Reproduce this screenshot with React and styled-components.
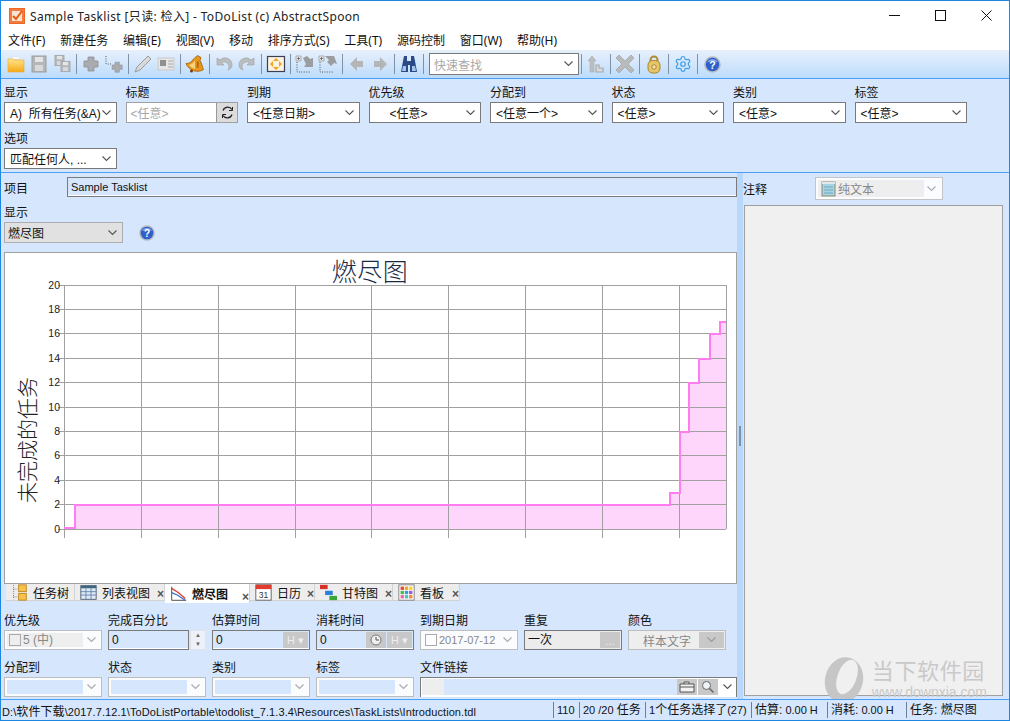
import styled, { createGlobalStyle } from "styled-components";
import { Settings } from "lucide-react";

const FONT = `"Liberation Sans", "Noto Sans CJK SC", sans-serif`;
const UI_FONT = `"Noto Sans", "Noto Sans CJK SC", sans-serif`;
const CJK = `"Noto Sans CJK SC", "Noto Sans", sans-serif`;
const PANEL = "#d6e7fd";
const LINE = "#4b9ff5";

const GlobalStyle = createGlobalStyle`
  html, body { margin: 0; padding: 0; background: #fff; }
  * { box-sizing: border-box; }
`;

////---- small drawings

const Chevron = ({ color = "#555" }) => (
  <svg width="9" height="6" viewBox="0 0 9 6">
    <polyline points="0.5,0.5 4.5,4.5 8.5,0.5" fill="none" stroke={color} strokeWidth="1.1" />
  </svg>
);

const HelpIcon = ({ size = 16 }) => (
  <svg width={size} height={size} viewBox="0 0 16 16">
    <circle cx="8" cy="8" r="7.8" fill="#b4b7c0" />
    <circle cx="8" cy="8" r="6.3" fill="#2f5fc8" />
    <path d="M3 6 A5.5 5 0 0 1 13 6 A9 6 0 0 0 3 6" fill="#8fb0ee" />
    <text x="8" y="12" textAnchor="middle" fontSize="10" fontWeight="700" fontFamily="Liberation Sans" fill="#fff">?</text>
  </svg>
);

const Ico = ({ children, w = 20, h = 20 }) => (
  <svg width={w} height={h} viewBox="0 0 20 20">
    {children}
  </svg>
);

const Cross = ({ x = 0, y = 0, s = 1 }) => (
  <path
    transform={`translate(${x} ${y}) scale(${s})`}
    d="M7 3h6v4h4v6h-4v4H7v-4H3V7h4z"
    fill="#a9abae"
    stroke="#8f9194"
    strokeWidth="0.8"
  />
);

const Floppy = ({ x = 0, y = 0, s = 1 }) => (
  <g transform={`translate(${x} ${y}) scale(${s})`}>
    <rect x="3" y="2" width="14" height="16" fill="#b5b6b8" stroke="#9c9d9f" />
    <rect x="6" y="3" width="8" height="5" fill="#e4e5e7" />
    <rect x="6" y="11" width="8" height="6" fill="#d8d9db" />
  </g>
);

const DotBox = ({ flip }) => (
  <g>
    <path d="M2 8v10h14" fill="none" stroke="#555" strokeWidth="1" strokeDasharray="1 1.4" />
    <path d="M1 2h5v5H1z" fill="#e8e8e8" stroke="#888" strokeWidth="0.6" />
    <path d="M3.5 3v3M2 4.5h3" stroke="#555" strokeWidth="0.7" />
    <path
      d={flip ? "M7 2h9l3 8-3-1-3 3-4-4 2-2z" : "M8 4l4-2 3 3 3-1v9h-9l2-3z"}
      fill="#9b9da0"
    />
  </g>
);

const TOOL_ICONS = {
  folder: (
    <Ico>
      <defs>
        <linearGradient id="fold" x1="0" y1="0" x2="0" y2="1">
          <stop offset="0" stopColor="#ffe58a" />
          <stop offset="1" stopColor="#f7a916" />
        </linearGradient>
      </defs>
      <path d="M4 5l3-2h5l3 2z" fill="#fff" stroke="#ddd" strokeWidth="0.5" />
      <path d="M2 5h5l1 1h10v12H2z" fill="url(#fold)" stroke="#e9a92b" strokeWidth="0.6" />
    </Ico>
  ),
  save: <Ico><Floppy /></Ico>,
  saveAll: (
    <Ico>
      <Floppy x="1" y="0" s="0.65" />
      <Floppy x="7" y="6" s="0.65" />
    </Ico>
  ),
  plus: <Ico><Cross /></Ico>,
  subPlus: (
    <Ico>
      <path d="M2 2v8h5" fill="none" stroke="#555" strokeDasharray="1 1.4" />
      <Cross x="6" y="6" s="0.72" />
    </Ico>
  ),
  pencil: (
    <Ico>
      <path d="M15 2l3 3L7 16l-5 2 2-5z" fill="#d9d9d9" stroke="#9a9a9a" />
    </Ico>
  ),
  card: (
    <Ico>
      <rect x="2" y="4" width="16" height="12" fill="#e6e6e6" stroke="#c9c9c9" />
      <rect x="4" y="6" width="6" height="6" fill="#909090" />
      <path d="M12 7h5M12 10h5M12 13h5" stroke="#aaa" />
    </Ico>
  ),
  bell: (
    <Ico>
      <path d="M12.5 1.500l3.500 2-1 3c2 3 2 6 3.500 9-2.500 2-8 2.500-11.500.5-2.500-1.500-5-3.500-6-6.500 3.500 0 5.500-1.500 7.500-4.500z" fill="#e8961c" stroke="#9a5a0a" strokeWidth="0.8" />
      <path d="M10 6.500c-1 2-3.500 4-6 4.500 1.500 2 3.500 3 6 4z" fill="#fbd277" />
      <path d="M12 7l2 1-.5 6-2-.5z" fill="#b8660c" />
      <circle cx="6.500" cy="17" r="1.500" fill="#7a3d05" />
    </Ico>
  ),
  undo: (
    <Ico>
      <path d="M3 4v7h7L7.500 8.500A5 5 0 0 1 15 13c0 1-.3 2-1 3 3-1 4-3 4-5A7 7 0 0 0 6 6z" fill="#bcbdbf" stroke="#9d9ea0" strokeWidth="0.6" />
    </Ico>
  ),
  redo: (
    <Ico>
      <path d="M17 4v7h-7l2.500-2.500A5 5 0 0 0 5 13c0 1 .3 2 1 3-3-1-4-3-4-5a7 7 0 0 1 12-5z" fill="#bcbdbf" stroke="#9d9ea0" strokeWidth="0.6" />
    </Ico>
  ),
  box: (
    <Ico>
      <rect x="1.500" y="2.500" width="17" height="15" fill="#fbf3e2" stroke="#3c3f55" strokeWidth="1.2" />
      <path d="M10 4l3 3H7zM10 16l-3-3h6zM4 10l3-3v6zM16 10l-3 3V7z" fill="#f2a31c" />
    </Ico>
  ),
  moveDown: <Ico><DotBox /></Ico>,
  moveUp: <Ico><DotBox flip /></Ico>,
  left: (
    <Ico>
      <path d="M3 10l7-7v4h6v6h-6v4z" fill="#b4b5b7" />
    </Ico>
  ),
  right: (
    <Ico>
      <path d="M17 10l-7-7v4H4v6h6v4z" fill="#b4b5b7" />
    </Ico>
  ),
  binoculars: (
    <Ico>
      <path d="M5 2h3v5h4V2h3l1 5 2 11h-7V11H9v7H2L4 7z" fill="#2c4a86" />
      <path d="M4 12h3v5H3zM13 12h3l1 5h-4z" fill="#a8c3ea" />
    </Ico>
  ),
  upLevel: (
    <Ico>
      <path d="M6 2l4 5H8v11H4V7H2z" fill="#bcbdbf" stroke="#a5a6a8" strokeWidth="0.5" />
      <path d="M10 11h3v3h4v4h-7z" fill="#d8d9db" stroke="#a8a9ab" strokeWidth="1.2" />
    </Ico>
  ),
  del: (
    <Ico>
      <path d="M4 1l6 6 6-6 3 3-6 6 6 6-3 3-6-6-6 6-3-3 6-6-6-6z" fill="#b9babc" stroke="#97989a" strokeWidth="0.6" />
    </Ico>
  ),
  lock: (
    <Ico>
      <path d="M6.500 8V6a3.500 3.500 0 0 1 7 0v2" fill="none" stroke="#b08a35" strokeWidth="2" />
      <rect x="4" y="6.500" width="12" height="12.500" rx="4.500" fill="#e6c468" stroke="#a98428" />
      <circle cx="10" cy="13" r="2.200" fill="#f4e3a8" stroke="#8d6d1c" strokeWidth="0.7" />
    </Ico>
  ),
};

const TreeTab = () => (
  <Ico w="17" h="17">
    <path d="M3 1v17M3 6h5M3 15h5" stroke="#666" strokeDasharray="1 1.4" fill="none" />
    <rect x="9" y="1" width="9" height="8" fill="#f7c24a" stroke="#b9801c" />
    <rect x="9" y="11" width="9" height="8" fill="#f7c24a" stroke="#b9801c" />
  </Ico>
);

const ListTab = () => (
  <Ico w="17" h="17">
    <rect x="1" y="2" width="18" height="16" fill="#dfe9f5" stroke="#41546b" />
    <rect x="1" y="2" width="18" height="3" fill="#41677f" />
    <path d="M1 9h18M1 13h18M7 5v13M13 5v13" stroke="#5d80a8" />
  </Ico>
);

const BurnTab = () => (
  <Ico w="17" h="17">
    <path d="M2 2v16h17" fill="none" stroke="#333" />
    <path d="M2 4l8 5 8 7" fill="none" stroke="#e03b2e" strokeWidth="1.5" />
    <path d="M2 9l7 3 9 6" fill="none" stroke="#3a6fd0" strokeWidth="1.5" />
  </Ico>
);

const CalendarTab = () => (
  <Ico w="17" h="17">
    <rect x="1" y="1" width="18" height="18" fill="#fff" stroke="#555" />
    <rect x="1" y="1" width="18" height="5" fill="#e23a2f" />
    <text x="10" y="16.500" textAnchor="middle" fontSize="10" fontFamily="Liberation Sans" fill="#333">31</text>
  </Ico>
);

const GanttTab = () => (
  <Ico w="17" h="17">
    <rect x="0" y="1" width="9" height="5" fill="#d8322a" />
    <rect x="6" y="8" width="9" height="5" fill="#2a7fd8" />
    <rect x="11" y="14" width="9" height="5" fill="#3aa63a" />
  </Ico>
);

const KanbanTab = () => {
  const colors = ["#e84b3c", "#f4a62a", "#f4d63a", "#4bb84b", "#3a9bd8", "#9a5bd0", "#e86aa8", "#52c0b8", "#f08a3c"];
  return (
    <Ico w="17" h="17">
      <rect x="1" y="1" width="18" height="18" fill="#fff" stroke="#777" />
      {colors.map((c, i) => (
        <rect key={c} x={3 + (i % 3) * 5} y={3 + Math.floor(i / 3) * 5} width="4" height="4" fill={c} />
      ))}
    </Ico>
  );
};

////---- chart data

const GRID_Y = [
  [20, 285], [18, 309], [16, 333], [14, 358], [12, 382], [10, 407],
  [8, 431], [6, 455], [4, 480], [2, 504], [0, 529],
];
const GRID_X = [64, 141, 218, 295, 371, 448, 525, 602, 679, 726];
const CURVE =
  "M64 528H75V505H670V493H680V432H689V383H699V359H710V334H720V322H726";

const BurndownChart = () => (
  <ChartSvg width="731" height="330" viewBox="5 253 731 330">
    <path d={`${CURVE}V529H64Z`} fill="#ffd6fb" />
    {GRID_Y.map(([v, y]) => (
      <g key={v}>
        <line x1="58" x2="726" y1={y + 0.5} y2={y + 0.5} stroke="#a0a0a0" />
        <text x="60" y={y + 4} textAnchor="end" fontSize="10.500" fontFamily="Liberation Sans" fill="#222">
          {v}
        </text>
      </g>
    ))}
    {GRID_X.map((x, i) => (
      <line
        key={x}
        x1={x + 0.5}
        x2={x + 0.5}
        y1="285"
        y2={i === GRID_X.length - 1 ? 529 : 538}
        stroke="#a0a0a0"
      />
    ))}
    <path d={CURVE} fill="none" stroke="#ff7df0" strokeWidth="2" />
    <text x="370" y="280.500" textAnchor="middle" fontSize="25" letterSpacing="0.5" fontFamily="Noto Sans CJK SC, serif" fontWeight="300" fill="#1a2a44">
      燃尽图
    </text>
    <text
      transform="translate(35 440) rotate(-90)"
      textAnchor="middle"
      fontSize="21"
      fontFamily="Noto Sans CJK SC, serif"
      fontWeight="300"
      fill="#222"
    >
      未完成的任务
    </text>
  </ChartSvg>
);

////---- main page

const MENU = ["文件(F)", "新建任务", "编辑(E)", "视图(V)", "移动", "排序方式(S)", "工具(T)", "源码控制", "窗口(W)", "帮助(H)"];

const FILTERS = [
  { label: "显示", value: "A)  所有任务(&A)" },
  { label: "标题", title: true },
  { label: "到期", value: "<任意日期>" },
  { label: "优先级", value: "<任意>", indent: true },
  { label: "分配到", value: "<任意一个>" },
  { label: "状态", value: "<任意>" },
  { label: "类别", value: "<任意>" },
  { label: "标签", value: "<任意>" },
  { label: "选项", value: "匹配任何人, ..." },
];

const TABS = [
  { name: "任务树", icon: <TreeTab />, width: 69 },
  { name: "列表视图", icon: <ListTab />, width: 90, close: true },
  { name: "燃尽图", icon: <BurnTab />, width: 85, close: true, active: true },
  { name: "日历", icon: <CalendarTab />, width: 65, close: true },
  { name: "甘特图", icon: <GanttTab />, width: 78, close: true },
  { name: "看板", icon: <KanbanTab />, width: 67, close: true },
];

const App = () => {
  return (
    <Window>
      <GlobalStyle />
      <TitleBar>
        <AppIcon>
          <svg width="16" height="16" viewBox="0 0 16 16">
            <rect x="0.500" y="0.500" width="15" height="15" fill="#f47b3c" stroke="#e9692b" />
            <rect x="3" y="3" width="10" height="10" fill="#fbe3d4" />
            <path d="M4 8l3 3 6-8" fill="none" stroke="#e8590c" strokeWidth="2" />
          </svg>
        </AppIcon>
        <TitleText>Sample Tasklist [只读: 检入] - ToDoList (c) AbstractSpoon</TitleText>
        <WinButtons>
          <WinButton>
            <svg width="11" height="11" viewBox="0 0 11 11"><path d="M0 5.500h11" stroke="#111" /></svg>
          </WinButton>
          <WinButton>
            <svg width="11" height="11" viewBox="0 0 11 11"><rect x="0.500" y="0.500" width="10" height="10" fill="none" stroke="#111" /></svg>
          </WinButton>
          <WinButton>
            <svg width="11" height="11" viewBox="0 0 11 11"><path d="M0.500 0.500l10 10M10.500 0.500l-10 10" stroke="#111" /></svg>
          </WinButton>
        </WinButtons>
      </TitleBar>

      <MenuBar>
        {MENU.map((item) => (
          <MenuItem key={item}>{item}</MenuItem>
        ))}
      </MenuBar>

      <Toolbar>
        <ToolBtn>{TOOL_ICONS.folder}</ToolBtn>
        <ToolBtn>{TOOL_ICONS.save}</ToolBtn>
        <ToolBtn>{TOOL_ICONS.saveAll}</ToolBtn>
        <ToolSep />
        <ToolBtn>{TOOL_ICONS.plus}</ToolBtn>
        <ToolBtn>{TOOL_ICONS.subPlus}</ToolBtn>
        <ToolSep />
        <ToolBtn>{TOOL_ICONS.pencil}</ToolBtn>
        <ToolBtn>{TOOL_ICONS.card}</ToolBtn>
        <ToolSep />
        <ToolBtn>{TOOL_ICONS.bell}</ToolBtn>
        <ToolSep />
        <ToolBtn>{TOOL_ICONS.undo}</ToolBtn>
        <ToolBtn>{TOOL_ICONS.redo}</ToolBtn>
        <ToolSep />
        <ToolBtn>{TOOL_ICONS.box}</ToolBtn>
        <ToolSep />
        <ToolBtn>{TOOL_ICONS.moveDown}</ToolBtn>
        <ToolBtn>{TOOL_ICONS.moveUp}</ToolBtn>
        <ToolSep />
        <ToolBtn>{TOOL_ICONS.left}</ToolBtn>
        <ToolBtn>{TOOL_ICONS.right}</ToolBtn>
        <ToolSep />
        <ToolBtn>{TOOL_ICONS.binoculars}</ToolBtn>
        <ToolSep />
        <QuickFind>
          <span>快速查找</span>
          <Chevron />
        </QuickFind>
        <ToolSep />
        <ToolBtn>{TOOL_ICONS.upLevel}</ToolBtn>
        <ToolSep />
        <ToolBtn>{TOOL_ICONS.del}</ToolBtn>
        <ToolSep />
        <ToolBtn>{TOOL_ICONS.lock}</ToolBtn>
        <ToolSep />
        <ToolBtn>
          <Settings size={18} color="#3d9fe2" strokeWidth={1.6} />
        </ToolBtn>
        <ToolSep />
        <ToolBtn>
          <HelpIcon size={17} />
        </ToolBtn>
      </Toolbar>

      <FilterBar>
        {FILTERS.map((f) => (
          <div key={f.label}>
            <FieldLabel>{f.label}</FieldLabel>
            {f.title ? (
              <TitleFilter>
                <span>&lt;任意&gt;</span>
                <RefreshBtn>
                  <svg width="13" height="13" viewBox="0 0 13 13">
                    <path d="M2 4.500a5 5 0 0 1 9-1M11 8.500a5 5 0 0 1-9 1" fill="none" stroke="#222" strokeWidth="1.2" />
                    <path d="M11.500 1v3.500H8M1.500 12V8.500H5" fill="none" stroke="#222" strokeWidth="1" />
                  </svg>
                </RefreshBtn>
              </TitleFilter>
            ) : (
              <Combo $indent={f.indent}>
                <span>{f.value}</span>
                <Chevron />
              </Combo>
            )}
          </div>
        ))}
      </FilterBar>

      <Body>
        <LeftPane>
          <ProjectRow>
            <ProjectLabel>项目</ProjectLabel>
            <ProjectInput>Sample Tasklist</ProjectInput>
          </ProjectRow>
          <ViewLabel>显示</ViewLabel>
          <ViewRow>
            <ViewSelect>
              <span>燃尽图</span>
              <Chevron />
            </ViewSelect>
            <HelpIcon />
          </ViewRow>
          <ChartBox>
            <BurndownChart />
          </ChartBox>
          <TabStrip>
            {TABS.map((t) => (
              <Tab key={t.name} $active={t.active} $width={t.width}>
                {t.icon}
                <TabName $active={t.active}>{t.name}</TabName>
                {t.close && <TabClose>×</TabClose>}
              </Tab>
            ))}
          </TabStrip>
          <FormGrid>
            <div>
              <FieldLabel>优先级</FieldLabel>
              <DimCombo>
                <DimFill $gray>
                  <CheckBox />
                  5 (中)
                </DimFill>
                <Chevron color="#aaa" />
              </DimCombo>
            </div>
            <div>
              <FieldLabel>完成百分比</FieldLabel>
              <SpinRow>
                <BlueInput>0</BlueInput>
                <Spinner>
                  <span>▲</span>
                  <span>▼</span>
                </Spinner>
              </SpinRow>
            </div>
            <div>
              <FieldLabel>估算时间</FieldLabel>
              <BlueInput>
                0
                <InputBtns>
                  <GrayBtn $wide>H ▾</GrayBtn>
                </InputBtns>
              </BlueInput>
            </div>
            <div>
              <FieldLabel>消耗时间</FieldLabel>
              <BlueInput>
                0
                <InputBtns>
                  <GrayBtn>
                    <svg width="12" height="12" viewBox="0 0 12 12">
                      <circle cx="6" cy="6" r="5" fill="#eee" stroke="#777" />
                      <path d="M6 3v3h3" fill="none" stroke="#555" />
                    </svg>
                  </GrayBtn>
                  <GrayBtn $wide>H ▾</GrayBtn>
                </InputBtns>
              </BlueInput>
            </div>
            <div>
              <FieldLabel>到期日期</FieldLabel>
              <DimCombo>
                <DimFill $small>
                  <CheckBox $white />
                  2017-07-12
                </DimFill>
                <Chevron color="#aaa" />
              </DimCombo>
            </div>
            <div>
              <FieldLabel>重复</FieldLabel>
              <RepeatBox>
                一次
                <InputBtns>
                  <GrayBtn $dots>...</GrayBtn>
                </InputBtns>
              </RepeatBox>
            </div>
            <ColorField>
              <FieldLabel>颜色</FieldLabel>
              <ColorCombo>
                样本文字
                <GrayBtn $wide>
                  <Chevron color="#999" />
                </GrayBtn>
              </ColorCombo>
            </ColorField>

            <div>
              <FieldLabel>分配到</FieldLabel>
              <DimCombo>
                <DimFill $blue />
                <Chevron color="#aaa" />
              </DimCombo>
            </div>
            <div>
              <FieldLabel>状态</FieldLabel>
              <DimCombo>
                <DimFill $blue />
                <Chevron color="#aaa" />
              </DimCombo>
            </div>
            <div>
              <FieldLabel>类别</FieldLabel>
              <DimCombo>
                <DimFill $blue />
                <Chevron color="#aaa" />
              </DimCombo>
            </div>
            <div>
              <FieldLabel>标签</FieldLabel>
              <DimCombo>
                <DimFill $blue />
                <Chevron color="#aaa" />
              </DimCombo>
            </div>
            <FileField>
              <FieldLabel>文件链接</FieldLabel>
              <FileBox>
                <FileStub />
                <FileBtn>
                  <svg width="16" height="12" viewBox="0 0 16 12">
                    <path d="M1 3h14v8H1zM5 3V1h5v2M1 6h14" fill="#f3f3f3" stroke="#555" />
                  </svg>
                </FileBtn>
                <FileBtn>
                  <svg width="14" height="14" viewBox="0 0 14 14">
                    <circle cx="5.500" cy="5.500" r="4" fill="#eef3f8" stroke="#666" />
                    <path d="M8.500 8.500l4 4" stroke="#666" strokeWidth="1.6" />
                  </svg>
                </FileBtn>
                <FileChevron>
                  <Chevron />
                </FileChevron>
              </FileBox>
            </FileField>
          </FormGrid>
        </LeftPane>

        <Splitter>
          <SplitHandle />
        </Splitter>

        <RightPane>
          <NotesHead>
            <NotesLabel>注释</NotesLabel>
            <NotesSelect>
              <NotesFill>
                <svg width="16" height="16" viewBox="0 0 16 16">
                  <rect x="2" y="1" width="13" height="14" fill="#a7d3e4" stroke="#8a8a70" />
                  <path d="M2 1h13v2H2z" fill="#dfe8ea" />
                  <path d="M4 6h9M4 9h9M4 12h9" stroke="#72aac2" />
                </svg>
                纯文本
              </NotesFill>
              <Chevron color="#aaa" />
            </NotesSelect>
          </NotesHead>
          <NotesPanel>
            <Watermark>
              <svg width="42" height="46" viewBox="0 0 42 46">
                <ellipse cx="21" cy="23" rx="19" ry="23" transform="rotate(14 21 23)" fill="#c6c6c6" />
                <ellipse cx="24" cy="20" rx="9.500" ry="18" transform="rotate(20 24 20)" fill="#f0f0f0" />
              </svg>
              <WatermarkText>
                <WatermarkName>当下软件园</WatermarkName>
                <WatermarkUrl>www.downxia.com</WatermarkUrl>
              </WatermarkText>
            </Watermark>
          </NotesPanel>
        </RightPane>
      </Body>

      <StatusBar>
        <StatusPath>
          D:\<Cjk>软件下载</Cjk>\2017.7.12.1\ToDoListPortable\todolist_7.1.3.4\Resources\TaskLists\Introduction.tdl
        </StatusPath>
        <StatusCell $width={26}>110</StatusCell>
        <StatusCell $width={66}>20 /20 <Cjk>任务</Cjk></StatusCell>
        <StatusCell $width={106}>1<Cjk>个任务选择了</Cjk>(27)</StatusCell>
        <StatusCell $width={76}><Cjk>估算:</Cjk> 0.00 H</StatusCell>
        <StatusCell $width={79}><Cjk>消耗:</Cjk> 0.00 H</StatusCell>
        <StatusCell $width={102}><Cjk>任务: 燃尽图</Cjk></StatusCell>
      </StatusBar>
    </Window>
  );
};

const Window = styled.div`
  width: 1010px;
  height: 721px;
  display: flex;
  flex-direction: column;
  overflow: hidden;
  border: 1px solid #1c86e0;
  background: #fff;
  font-family: ${FONT};
  font-size: 12px;
  color: #111;
`;

const TitleBar = styled.div`
  height: 29px;
  flex: none;
  display: flex;
  align-items: center;
  padding-left: 8px;
`;

const AppIcon = styled.div`
  width: 16px;
  height: 16px;
  margin-right: 5px;
  display: flex;
`;

const TitleText = styled.div`
  flex: 1;
  font-family: ${UI_FONT};
  font-size: 12px;
  letter-spacing: 0.35px;
  color: #222;
`;

const WinButtons = styled.div`
  display: flex;
`;

const WinButton = styled.div`
  width: 46px;
  height: 29px;
  display: flex;
  align-items: center;
  justify-content: center;
`;

const MenuBar = styled.div`
  height: 20px;
  flex: none;
  display: flex;
  align-items: center;
  gap: 14.8px;
  padding: 1px 0 0 7px;
  font-family: ${UI_FONT};
`;

const MenuItem = styled.span`
  line-height: 19px;
  white-space: nowrap;
`;

const Toolbar = styled.div`
  height: 29px;
  flex: none;
  display: flex;
  align-items: center;
  padding-left: 3.5px;
  background: linear-gradient(#e6f0fc, #d7e8fc 40%, #bcdcfb);
  border-bottom: 1px solid ${LINE};
`;

const ToolBtn = styled.div`
  width: 23px;
  height: 24px;
  flex: none;
  display: flex;
  align-items: center;
  justify-content: center;
`;

const ToolSep = styled.div`
  width: 1px;
  height: 20px;
  flex: none;
  margin: 0 2.5px;
  background: #7f92a8;
`;

const QuickFind = styled.div`
  width: 150px;
  height: 22px;
  flex: none;
  margin: 0 -0.5px 0 2.5px;
  display: flex;
  align-items: center;
  justify-content: space-between;
  padding: 0 5px 0 4px;
  background: #fff;
  border: 1px solid #7a7a7a;
  color: #a8a8a8;
`;

const FilterBar = styled.div`
  height: 94px;
  flex: none;
  display: grid;
  grid-template-columns: repeat(8, 112.5px);
  column-gap: 9px;
  row-gap: 8px;
  align-content: start;
  padding: 6px 0 0 3px;
  background: ${PANEL};
  border-bottom: 1px solid ${LINE};
`;

const FieldLabel = styled.div`
  height: 15px;
  margin-bottom: 2px;
  line-height: 17px;
  white-space: nowrap;
`;

const Combo = styled.div`
  height: 21px;
  display: flex;
  align-items: center;
  justify-content: space-between;
  padding: 0 5px 0 ${(p) => (p.$indent ? "20px" : "5px")};
  background: #fff;
  border: 1px solid #7a7a7a;
  white-space: pre;
  overflow: hidden;
`;

const TitleFilter = styled(Combo)`
  padding: 0 0 0 4px;
  border-color: #a0a0a0;
  color: #a8a8a8;
`;

const RefreshBtn = styled.div`
  width: 21px;
  height: 19px;
  display: flex;
  align-items: center;
  justify-content: center;
  background: #dcdcdc;
  border-left: 1px solid #999;
`;

const Body = styled.div`
  flex: 1;
  min-height: 0;
  display: flex;
  background: ${PANEL};
  overflow: hidden;
`;

const LeftPane = styled.div`
  width: 736px;
  flex: none;
  padding: 4px 0 0 3px;
`;

const ProjectRow = styled.div`
  height: 20px;
  display: flex;
  align-items: center;
`;

const ProjectLabel = styled.div`
  width: 63px;
  flex: none;
`;

const ProjectInput = styled.div`
  flex: 1;
  height: 20px;
  line-height: 18px;
  padding-left: 3px;
  font-size: 11px;
  border: 1px solid #7a7a7a;
  box-shadow: inset 0 -1px 0 #fff;
`;

const ViewLabel = styled(FieldLabel)`
  margin-top: 8px;
`;

const ViewRow = styled.div`
  height: 21px;
  margin-bottom: 9px;
  display: flex;
  align-items: center;
  gap: 16px;
`;

const ViewSelect = styled.div`
  width: 119px;
  height: 21px;
  display: flex;
  align-items: center;
  justify-content: space-between;
  padding: 0 5px 0 3px;
  background: #e1e1e1;
  border: 1px solid #adadad;
`;

const ChartBox = styled.div`
  height: 332px;
  background: #fff;
  border: 1px solid #a0a0a0;
`;

const ChartSvg = styled.svg`
  display: block;
  overflow: visible;
`;

const TabStrip = styled.div`
  height: 19px;
  display: flex;
  align-items: flex-start;
  padding-left: 2px;
`;

const Tab = styled.div`
  position: relative;
  width: ${(p) => p.$width}px;
  height: ${(p) => (p.$active ? "19px" : "17px")};
  flex: none;
  display: flex;
  align-items: center;
  gap: 5px;
  padding-left: 5px;
  background: ${(p) => (p.$active ? "#fff" : "#ededed")};
  border-right: 1px solid #d2d2d2;
  border-bottom: ${(p) => (p.$active ? "none" : "1px solid #d2d2d2")};
`;

const TabName = styled.span`
  font-weight: ${(p) => (p.$active ? 700 : 400)};
  white-space: nowrap;
`;

const TabClose = styled.span`
  position: absolute;
  right: 0;
  bottom: 0;
  font-size: 12px;
  line-height: 12px;
  font-weight: 700;
  color: #555;
`;

const FormGrid = styled.div`
  display: grid;
  grid-template-columns: repeat(6, 98px) 109px;
  column-gap: 6px;
  row-gap: 10px;
  padding-top: 10px;
`;

const DimCombo = styled.div`
  height: 20px;
  display: flex;
  align-items: center;
  justify-content: space-between;
  padding: 2px 5px 2px 2px;
  background: #fbfcfe;
  border: 1px solid #bdbdbd;
`;

const DimFill = styled.div`
  width: 76px;
  height: 100%;
  display: flex;
  align-items: center;
  gap: 2px;
  padding-left: 2px;
  color: #888;
  white-space: nowrap;
  line-height: 14px;
  font-size: ${(p) => (p.$small ? "11px" : "12px")};
  background: ${(p) => (p.$gray ? "#eeeeee" : p.$blue ? PANEL : "transparent")};
`;

const CheckBox = styled.span`
  width: 12px;
  height: 12px;
  flex: none;
  background: ${(p) => (p.$white ? "#fff" : "transparent")};
  border: 1px solid #aaa;
`;

const SpinRow = styled.div`
  display: flex;
  gap: 1px;
`;

const BlueInput = styled.div`
  position: relative;
  flex: 1;
  height: 20px;
  line-height: 18px;
  padding-left: 3px;
  border: 1px solid #7a7a7a;
  box-shadow: inset 0 -1px 0 #fff;
`;

const Spinner = styled.div`
  width: 16px;
  height: 20px;
  display: flex;
  flex-direction: column;
  align-items: center;
  justify-content: space-between;
  background: #eef2f8;
  border: 1px solid #dde3ec;
  font-size: 6px;
  line-height: 9px;
  color: #666;
`;

const InputBtns = styled.div`
  position: absolute;
  top: 1px;
  right: 1px;
  bottom: 1px;
  display: flex;
  gap: 1px;
`;

const GrayBtn = styled.div`
  width: ${(p) => (p.$wide ? "25px" : "20px")};
  height: 100%;
  display: flex;
  align-items: ${(p) => (p.$dots ? "flex-end" : "center")};
  justify-content: center;
  background: #c8c8c8;
  color: #eee;
  font-size: 11px;
  line-height: 14px;
`;

const RepeatBox = styled.div`
  position: relative;
  height: 20px;
  line-height: 18px;
  padding-left: 3px;
  background: #ececec;
  border: 1px solid #7a7a7a;
`;

const ColorField = styled.div`
  width: 98px;
`;

const ColorCombo = styled.div`
  position: relative;
  height: 20px;
  display: flex;
  align-items: center;
  justify-content: space-between;
  padding: 1px 1px 1px 14px;
  background: #eeeeee;
  border: 1px solid #bdbdbd;
  color: #888;
  white-space: nowrap;
`;

const FileField = styled.div`
  grid-column: span 3;
`;

const FileBox = styled.div`
  height: 20px;
  display: flex;
  align-items: center;
  padding: 1px 1px 2px 1px;
  background: #fff;
  border: 1px solid #7a7a7a;
  border-bottom: none;
`;

const FileStub = styled.div`
  width: 255px;
  height: 100%;
  background: linear-gradient(90deg, #eee 22px, ${PANEL} 22px);
`;

const FileBtn = styled.div`
  width: 20px;
  height: 100%;
  margin-right: 1px;
  display: flex;
  align-items: center;
  justify-content: center;
  background: #c8c8c8;
`;

const FileChevron = styled.div`
  flex: 1;
  display: flex;
  justify-content: center;
`;

const Splitter = styled.div`
  width: 6px;
  flex: none;
  display: flex;
  align-items: center;
  justify-content: center;
  background: #b8d8fb;
`;

const SplitHandle = styled.div`
  width: 2px;
  height: 20px;
  background: #7d93ad;
`;

const RightPane = styled.div`
  flex: 1;
  min-width: 0;
  display: flex;
  flex-direction: column;
  padding: 4px 6px 3px 0;
`;

const NotesHead = styled.div`
  height: 23px;
  margin-bottom: 5px;
  flex: none;
  display: flex;
  align-items: center;
`;

const NotesLabel = styled.div`
  width: 72px;
  flex: none;
`;

const NotesSelect = styled.div`
  width: 128px;
  height: 23px;
  display: flex;
  align-items: center;
  justify-content: space-between;
  padding: 2px 6px 2px 2px;
  background: #fafcff;
  border: 1px solid #c4c4c4;
`;

const NotesFill = styled.div`
  width: 106px;
  height: 100%;
  display: flex;
  align-items: center;
  gap: 2px;
  padding-left: 2px;
  background: #eeeeee;
  color: #888;
`;

const NotesPanel = styled.div`
  position: relative;
  flex: 1;
  margin-left: 1px;
  background: #f0f0f0;
  border: 1px solid #a0a0a0;
`;

const Watermark = styled.div`
  position: absolute;
  right: 15px;
  bottom: -8px;
  display: flex;
  align-items: flex-end;
  gap: 7px;
`;

const WatermarkText = styled.div`
  display: flex;
  flex-direction: column;
  align-items: flex-start;
  margin-bottom: 4px;
  color: #c9c9c9;
`;

const WatermarkName = styled.div`
  font-family: ${CJK};
  font-size: 22px;
  line-height: 32px;
  letter-spacing: 0.6px;
`;

const WatermarkUrl = styled.div`
  font-family: "Liberation Sans", sans-serif;
  font-size: 14px;
  line-height: 14px;
`;

const StatusBar = styled.div`
  height: 21px;
  flex: none;
  display: flex;
  align-items: center;
  padding-left: 1px;
  background: ${PANEL};
  border-top: 1px solid ${LINE};
  font-size: 11px;
  white-space: nowrap;
`;

const Cjk = styled.span`
  font-size: 12px;
`;

const StatusPath = styled.div`
  width: 551px;
  flex: none;
  overflow: hidden;
  letter-spacing: 0.08px;
`;

const StatusCell = styled.div`
  width: ${(p) => p.$width}px;
  flex: none;
  height: 16px;
  line-height: 16px;
  padding-left: 3px;
  border-left: 1px solid #6d7f94;
`;

export default App;
